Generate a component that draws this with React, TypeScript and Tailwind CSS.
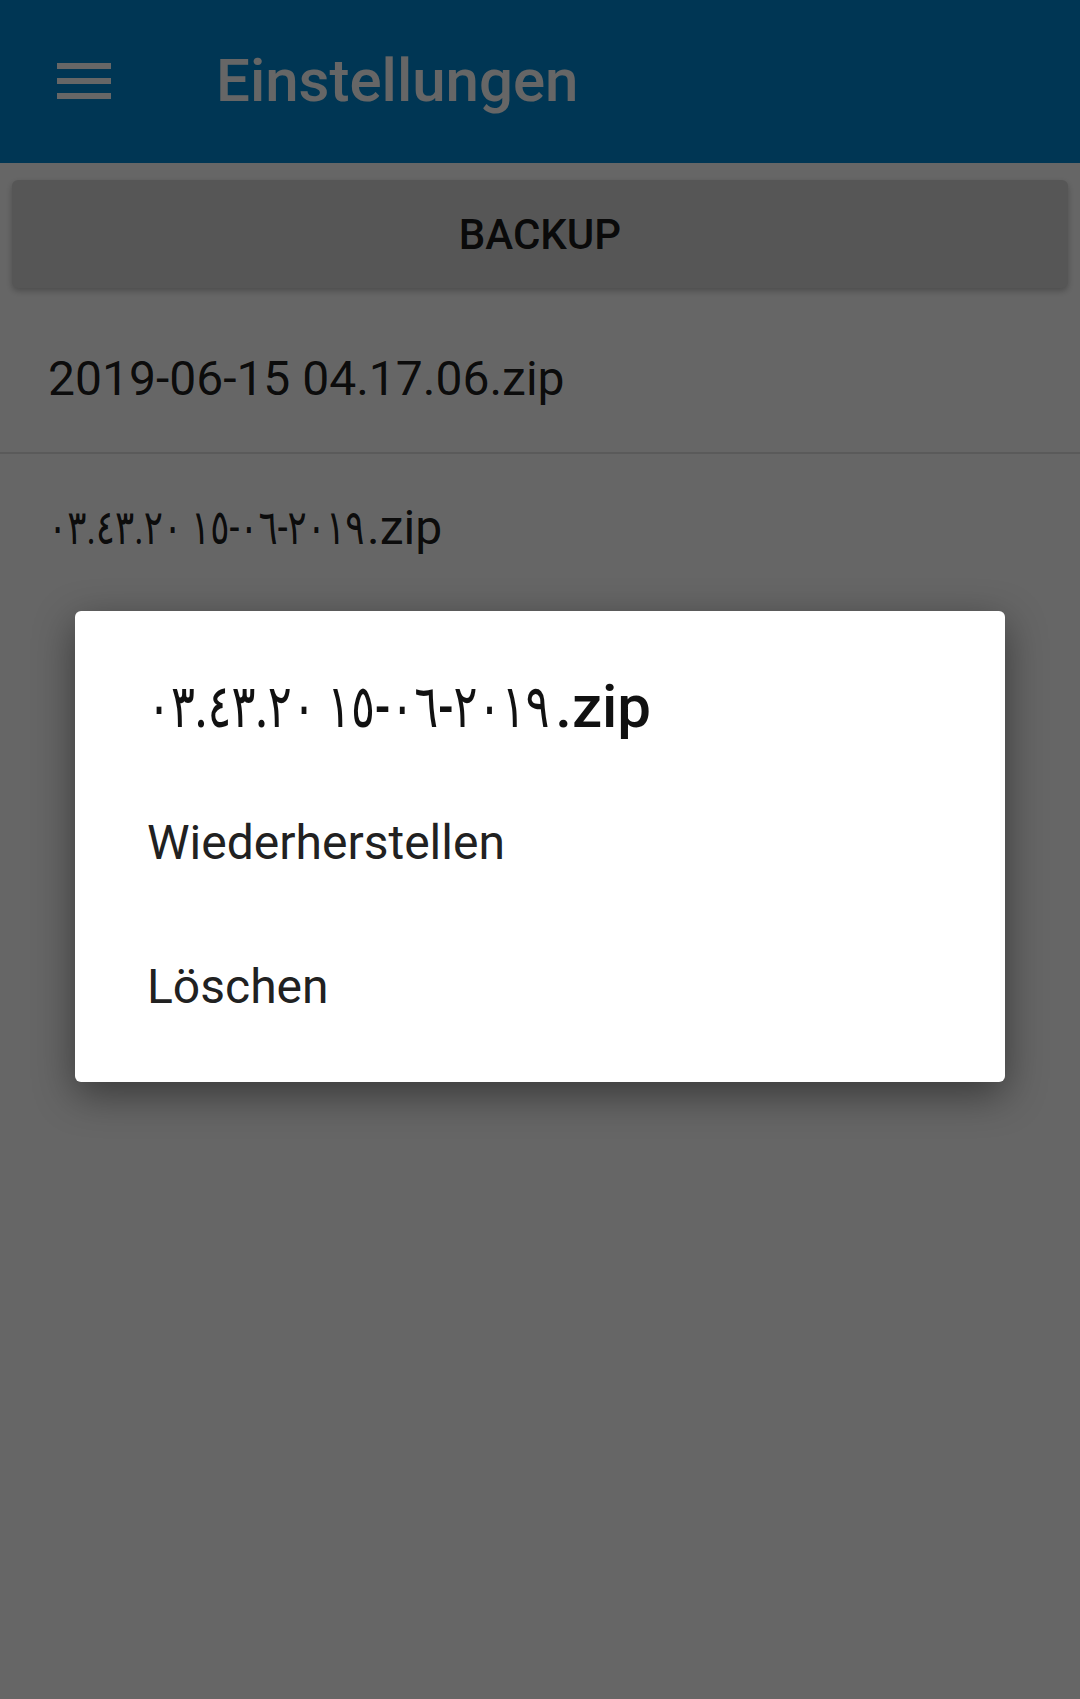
import React from "react";

type Backup = { date: string; ext: string };

const backups: Backup[] = [
  { date: "2019-06-15 04.17.06", ext: ".zip" },
  { date: "٢٠١٩-٠٦-١٥ ٠٣.٤٣.٢٠", ext: ".zip" },
];

// arabic-indic digits fall back to a much wider font than on the device,
// so squeeze that part horizontally
function isArabic(s: string) {
  return /[\u0660-\u0669]/.test(s);
}

function FileName({ b }: { b: Backup }) {
  if (!isArabic(b.date)) {
    return (
      <>
        {b.date}
        {b.ext}
      </>
    );
  }
  return (
    <>
      <span className="mr-[-2.2em] inline-block origin-left scale-x-[0.745] whitespace-nowrap">
        {b.date}
      </span>
      {b.ext}
    </>
  );
}

function MenuIcon() {
  return (
    <svg width="54" height="36" viewBox="0 0 54 36" className="block">
      <rect x="0" y="0" width="54" height="6" fill="#ffffff" />
      <rect x="0" y="15" width="54" height="6" fill="#ffffff" />
      <rect x="0" y="30" width="54" height="6" fill="#ffffff" />
    </svg>
  );
}

export default function App() {
  const selected = backups[1];

  return (
    <div className="relative h-[1699px] w-[1080px] overflow-hidden bg-white font-[Roboto,'DejaVu_Sans',sans-serif]">
      <header className="flex h-[163px] items-center bg-[#0288d1] pb-[2px]">
        <div className="ml-[57px]">
          <MenuIcon />
        </div>
        <h1 className="ml-[105px] text-[60px] font-medium leading-none text-white">
          Einstellungen
        </h1>
      </header>

      <main>
        <div className="mx-[12px] mt-[17px]">
          <button className="flex h-[108px] w-full items-center justify-center rounded-[6px] bg-[#d6d6d6] text-[42px] font-medium text-black/90 shadow-[0_3px_6px_rgba(0,0,0,0.25)]">
            BACKUP
          </button>
        </div>

        <ul className="mt-[17px]">
          {backups.map((b, i) => (
            <li key={b.date}>
              <div className="flex h-[147px] items-center pl-[48px] text-[48px] text-black/90">
                <span>
                  <FileName b={b} />
                </span>
              </div>
              {i < backups.length - 1 && <div className="h-[2px] bg-[#e0e0e0]" />}
            </li>
          ))}
        </ul>
      </main>

      {/* dimmed backdrop + context dialog */}
      <div className="absolute inset-0 flex items-center justify-center bg-black/60 pb-[6px]">
        <div className="w-[930px] rounded-[6px] bg-white pb-[23px] shadow-[0_12px_40px_rgba(0,0,0,0.45)]">
          <h2 className="pl-[72px] pt-[60px] text-[60px] font-medium leading-[72px] text-[#111]">
            <FileName b={selected} />
          </h2>
          <div className="mt-[28px]">
            {["Wiederherstellen", "Löschen"].map((action) => (
              <div
                key={action}
                className="flex h-[144px] items-center pl-[72px] text-[48px] text-[#212121]"
              >
                {action}
              </div>
            ))}
          </div>
        </div>
      </div>
    </div>
  );
}
